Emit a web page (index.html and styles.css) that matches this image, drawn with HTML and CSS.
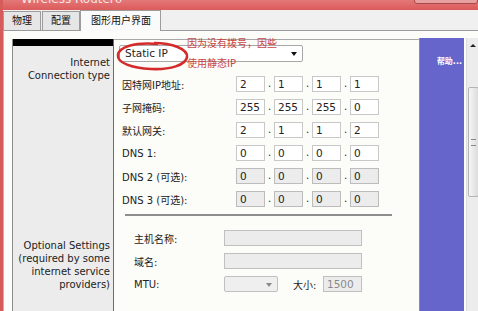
FILE: index.html
```html
<!DOCTYPE html>
<html lang="zh-CN">
<head>
    <meta charset="UTF-8">
    <title>Wireless Router0</title>
    <link rel="stylesheet" href="styles.css">
</head>
<body>
    <div class="window">
        <div class="titlebar">
            <span class="title">Wireless Router0</span>
            <span class="caption-btns"></span>
        </div>

        <div class="tabs">
            <div class="tab">物理</div>
            <div class="tab">配置</div>
            <div class="tab active">图形用户界面</div>
        </div>

        <div class="content">
            <div class="panel">
                <div class="side">
                    <div class="side-head"></div>
                    <div class="side-label first">Internet<br>Connection type</div>
                    <div class="side-label second">Optional Settings<br>(required by some<br>internet service<br>providers)</div>
                </div>

                <div class="form">
                    <div class="select wide">Static IP<span class="arrow"></span></div>

                    <div class="ip-row">
                        <span class="label">因特网IP地址:</span>
                        <span class="box">2</span><span class="dot">.</span><span class="box">1</span><span class="dot">.</span><span class="box">1</span><span class="dot">.</span><span class="box">1</span>
                    </div>
                    <div class="ip-row">
                        <span class="label">子网掩码:</span>
                        <span class="box">255</span><span class="dot">.</span><span class="box">255</span><span class="dot">.</span><span class="box">255</span><span class="dot">.</span><span class="box">0</span>
                    </div>
                    <div class="ip-row">
                        <span class="label">默认网关:</span>
                        <span class="box">2</span><span class="dot">.</span><span class="box">1</span><span class="dot">.</span><span class="box">1</span><span class="dot">.</span><span class="box">2</span>
                    </div>
                    <div class="ip-row">
                        <span class="label">DNS 1:</span>
                        <span class="box">0</span><span class="dot">.</span><span class="box">0</span><span class="dot">.</span><span class="box">0</span><span class="dot">.</span><span class="box">0</span>
                    </div>
                    <div class="ip-row">
                        <span class="label">DNS 2 (可选):</span>
                        <span class="box off">0</span><span class="dot">.</span><span class="box off">0</span><span class="dot">.</span><span class="box off">0</span><span class="dot">.</span><span class="box off">0</span>
                    </div>
                    <div class="ip-row">
                        <span class="label">DNS 3 (可选):</span>
                        <span class="box off">0</span><span class="dot">.</span><span class="box off">0</span><span class="dot">.</span><span class="box off">0</span><span class="dot">.</span><span class="box off">0</span>
                    </div>

                    <div class="divider"></div>

                    <div class="opt-row">
                        <span class="opt-label">主机名称:</span>
                        <span class="long-box"></span>
                    </div>
                    <div class="opt-row">
                        <span class="opt-label">域名:</span>
                        <span class="long-box"></span>
                    </div>
                    <div class="opt-row">
                        <span class="opt-label">MTU:</span>
                        <span class="select small"><span class="arrow grey"></span></span>
                        <span class="size-label">大小:</span>
                        <span class="size-box">1500</span>
                    </div>

                    <!-- 手写的标注 -->
                    <svg class="ring" width="76" height="32" viewBox="0 0 76 32">
                        <path d="M40 3 C58 3 74 9 73 17 C72 25 56 30 37 29 C18 28 3 23 4 15 C5 7 20 2 44 4" fill="none" stroke="#d42a2a" stroke-width="2.6"/>
                    </svg>
                    <div class="note">因为没有拨号，因些<br>使用静态IP</div>
                </div>

                <div class="help">帮助...</div>

                <div class="scrollbar">
                    <span class="up"></span>
                    <span class="thumb"><span class="grip"></span></span>
                </div>
            </div>
        </div>
    </div>
</body>
</html>
```

FILE: styles.css
```css
body {
    margin: 0;
    width: 478px;
    height: 311px;
    overflow: hidden;
    background: #fcfcf8;
    font-family: "DejaVu Sans", "Noto Sans CJK SC", sans-serif;
    font-size: 10px;
    color: #222;
}

.window {
    display: flex;
    flex-direction: column;
    height: 311px;
    border-left: 3px solid #d65c5c;
}

.titlebar {
    height: 10px;
    overflow: hidden;
    display: flex;
    background: linear-gradient(#e47878, #dc5a5a);
}

.title {
    display: block;
    margin: -8px 0 0 18px;
    font-size: 12px;
    line-height: 14px;
    color: #f6e6e6;
}

.caption-btns {
    margin-left: auto;
    margin-top: -4px;
    width: 62px;
    height: 6px;
    border: 1px solid #a84a4a;
    border-radius: 0 0 3px 3px;
    background: #e8a0a0;
}

.tabs {
    height: 20px;
    display: flex;
    align-items: flex-end;
    gap: 1px;
    background: #f0f0f0;
    border-bottom: 1px solid #9a9a9a;
}

.tab {
    height: 18px;
    line-height: 18px;
    padding: 0 8px;
    background: #e6e6e6;
    border: 1px solid #9c9c9c;
    border-bottom: none;
    font-size: 10px;
    color: #111;
}

.tab.active {
    height: 20px;
    line-height: 20px;
    margin-bottom: -1px;
    margin-left: -1px;
    padding: 0 9px 0 10px;
    background: #fafafa;
}

.content {
    flex: 1;
    padding: 8px 0 0 8px;
    border-left: 1px solid #b8b8b8;
    display: flex;
}

.panel {
    flex: 1;
    display: flex;
}

.side {
    width: 100px;
    background: #ececec;
    border-left: 1px solid #8c8c8c;
    border-right: 1px solid #6c6c6c;
}

.side-head {
    height: 7px;
    background: #000;
}

.side-label {
    text-align: right;
    padding-right: 3px;
    line-height: 13px;
    font-size: 10px;
}

.side-label.first {
    margin-top: 10px;
}

.side-label.second {
    margin-top: 157px;
}

.form {
    position: relative;
    width: 305px;
    padding-top: 5px;
    border-top: 1px solid #a8a8a8;
    background: #fcfcf8;
}

.select {
    position: relative;
    box-sizing: border-box;
    height: 17px;
    line-height: 15px;
    padding-left: 5px;
    background: #fff;
    border: 1px solid #a8a8a8;
    border-radius: 2px;
    font-size: 10.5px;
}

.select.wide {
    width: 184px;
    margin: 0 0 14px 5px;
}

.select.small {
    width: 54px;
    height: 16px;
    background: #efefef;
    border-color: #c0c0c0;
}

.arrow {
    position: absolute;
    right: 5px;
    top: 6px;
    border-left: 3px solid transparent;
    border-right: 3px solid transparent;
    border-top: 4px solid #111;
}

.arrow.grey {
    border-top-color: #8a8a8a;
}

.ip-row {
    display: flex;
    align-items: center;
    height: 16px;
    margin-bottom: 7px;
    padding-left: 8px;
}

.label {
    width: 114px;
    font-size: 10px;
}

.box {
    box-sizing: border-box;
    width: 29px;
    height: 16px;
    line-height: 14px;
    padding-left: 3px;
    background: #fff;
    border: 1px solid #c8c8c8;
    font-size: 10.5px;
}

.box.off {
    background: #ececec;
    border-color: #bcbcbc;
}

.dot {
    width: 9px;
    text-align: center;
    line-height: 20px;
    font-size: 10px;
}

.divider {
    width: 267px;
    height: 2px;
    margin: 6px 0 14px 11px;
    background: #8e8e8e;
}

.opt-row {
    display: flex;
    align-items: center;
    height: 16px;
    margin-bottom: 7px;
    padding-left: 20px;
}

.opt-label {
    width: 90px;
}

.long-box,
.size-box {
    box-sizing: border-box;
    height: 16px;
    background: #ececec;
    border: 1px solid #c0c0c0;
}

.long-box {
    width: 138px;
}

.size-label {
    margin-left: 15px;
    width: 30px;
}

.size-box {
    width: 39px;
    line-height: 14px;
    padding-left: 3px;
    color: #8a8a8a;
    font-size: 10.5px;
}

.ring {
    position: absolute;
    left: 0;
    top: 0;
}

.note {
    position: absolute;
    left: 73px;
    top: -6px;
    line-height: 20px;
    font-size: 10px;
    color: #c94444;
}

.help {
    width: 45px;
    margin-top: -1px;
    padding-top: 17px;
    box-sizing: border-box;
    text-align: right;
    padding-right: 2px;
    background: #6565cb;
    color: #fff;
    font-weight: bold;
    font-size: 8px;
    border-left: 1px solid #8a8ab0;
}

.scrollbar {
    position: relative;
    width: 12px;
    margin-left: 2px;
    margin-top: -1px;
    background: #ececec;
    border-left: 1px solid #dcdcdc;
}

.up {
    position: absolute;
    left: 3px;
    top: 6px;
    border-left: 3px solid transparent;
    border-right: 3px solid transparent;
    border-bottom: 3px solid #222;
}

.thumb {
    position: absolute;
    left: 1px;
    top: 49px;
    width: 9px;
    height: 108px;
    border: 1px solid #b4b4b4;
    border-radius: 2px;
    background: linear-gradient(90deg, #f6f6f6, #dcdcdc);
}

.grip {
    position: absolute;
    left: 2px;
    top: 51px;
    width: 5px;
    height: 5px;
    border-top: 1px solid #888;
    border-bottom: 1px solid #888;
}
```
